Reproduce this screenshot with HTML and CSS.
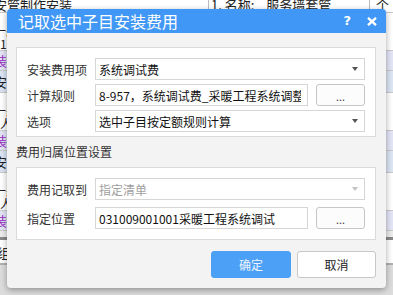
FILE: index.html
```html
<!DOCTYPE html>
<html lang="zh-CN">
<head>
<meta charset="utf-8">
<title>记取选中子目安装费用</title>
<link rel="stylesheet" href="styles.css">
</head>
<body>
<div class="sheet">
  <div class="srow head">
    <div class="cl">安管制作安装</div>
    <div class="cm"><span class="k">1. 名称:</span><span>服务墙套管</span></div>
    <div class="cr">个</div>
  </div>
  <div class="srow two">
    <div class="cl">一般管道<br>1)</div><div class="cm"></div><div class="cr"></div>
  </div>
  <div class="srow pur"><div class="cl">装饰</div><div class="cm"></div><div class="cr"></div></div>
  <div class="srow blue"><div class="cl">安管</div><div class="cm"></div><div class="cr"></div></div>
  <div class="srow two">
    <div class="cl">一般管道<br>人)</div><div class="cm"></div><div class="cr"></div>
  </div>
  <div class="srow pur"><div class="cl">装饰</div><div class="cm"></div><div class="cr"></div></div>
  <div class="srow blue"><div class="cl">安管</div><div class="cm"></div><div class="cr"></div></div>
  <div class="srow two">
    <div class="cl">一般管道<br>人)</div><div class="cm"></div><div class="cr"></div>
  </div>
  <div class="srow pur"><div class="cl">装饰</div><div class="cm"></div><div class="cr"></div></div>
  <div class="srow last"><div class="cl">组</div><div class="cm"></div><div class="cr">统</div></div>
</div>

<div class="dialog">
  <div class="titlebar">
    <span class="title">记取选中子目安装费用</span>
    <span class="tb-btns">
      <span class="help">?</span>
      <svg class="close" width="10" height="9" viewBox="0 0 10 9"><path d="M1 0.8 L9 8.2 M9 0.8 L1 8.2" stroke="#fff" stroke-width="2.3" fill="none"/></svg>
    </span>
  </div>
  <div class="body">
    <div class="panel p1">
      <div class="row">
        <span class="label">安装费用项</span>
        <div class="field select"><span class="val">系统调试费</span><span class="caret"></span></div>
      </div>
      <div class="row">
        <span class="label">计算规则</span>
        <div class="field"><span class="val">8-957，系统调试费_采暖工程系统调整费</span></div>
        <button class="dots">...</button>
      </div>
      <div class="row">
        <span class="label">选项</span>
        <div class="field select"><span class="val">选中子目按定额规则计算</span><span class="caret"></span></div>
      </div>
    </div>
    <div class="section">费用归属位置设置</div>
    <div class="panel p2">
      <div class="row">
        <span class="label">费用记取到</span>
        <div class="field select disabled"><span class="val">指定清单</span><span class="caret"></span></div>
      </div>
      <div class="row">
        <span class="label">指定位置</span>
        <div class="field"><span class="val">031009001001采暖工程系统调试</span></div>
        <button class="dots">...</button>
      </div>
    </div>
    <div class="actions">
      <button class="btn primary">确定</button>
      <button class="btn">取消</button>
    </div>
  </div>
</div>
</body>
</html>
```

FILE: styles.css
```css
* { box-sizing: border-box; }
html, body {
  margin: 0;
  padding: 0;
  width: 393px;
  height: 295px;
  overflow: hidden;
  background: #dcdcdc;
  font-family: "Noto Sans CJK SC", "Microsoft YaHei", "Noto Sans", sans-serif;
  font-size: 12px;
  color: #222;
}

/* background spreadsheet */
.sheet {
  margin-top: -4px;
  display: flex;
  flex-direction: column;
  background: #ececec;
}
.srow {
  display: flex;
  background: #fff;
  border-bottom: 1px solid #c9c9c9;
  line-height: 12px;
}
.cl {
  width: 209px;
  flex: none;
  overflow: hidden;
  white-space: nowrap;
  text-indent: -6px;
  border-right: 1px solid #bcbcbc;
  font-size: 13px;
}
.cm {
  width: 161px;
  flex: none;
  border-right: 1px solid #bcbcbc;
  white-space: nowrap;
  font-size: 13px;
  padding-left: 2px;
}
.cm .k { margin-right: 12px; }
.cr { flex: 1; font-size: 13px; padding-left: 6px; overflow: hidden; white-space: nowrap; }
.head { height: 17px; line-height: 17px; }
.two { height: 38px; padding-top: 11px; }
.two .cl { line-height: 13px; font-size: 12px; }
.pur { height: 20px; line-height: 20px; background: #e3e4f6; }
.pur .cl { color: #9a2fc2; }
.blue { height: 22px; line-height: 22px; background: #dbe5f3; }
.last {
  height: 28px;
  line-height: 26px;
  border-top: 3px solid #8a8a8a;
  border-bottom: 2px solid #b0b0b0;
  margin-top: 6px;
}
.last .cl { text-indent: -3px; }
.last .cr { padding-left: 0; text-indent: -1px; }

/* dialog */
.dialog {
  position: absolute;
  left: 7px;
  top: 9px;
  width: 379px;
  height: 279px;
  background: #f3f3f3;
  border-radius: 4px;
  box-shadow: 0 2px 6px rgba(0, 0, 0, 0.35);
  display: flex;
  flex-direction: column;
  overflow: hidden;
}
.titlebar {
  height: 24px;
  flex: none;
  background: #4097f5;
  color: #fff;
  display: flex;
  align-items: center;
  justify-content: space-between;
  padding: 0 9px 0 11px;
}
.title { font-size: 16px; line-height: 24px; letter-spacing: 0; }
.tb-btns { display: flex; align-items: center; gap: 16px; }
.help {
  font-family: "DejaVu Sans", sans-serif;
  font-weight: bold;
  font-size: 13px;
  line-height: 24px;
}
.close { display: block; }

.body {
  flex: 1;
  padding: 14px 10px 10px 9px;
  display: flex;
  flex-direction: column;
}
.panel {
  background: #fff;
  border: 1px solid #dadada;
  display: flex;
  flex-direction: column;
  padding: 10px 10px 4px 10px;
  gap: 4px;
}
.p2 { padding: 10px 10px 10px 10px; gap: 7px; }
.row {
  display: flex;
  align-items: center;
  height: 22px;
}
.label {
  width: 68px;
  flex: none;
  color: #333;
  font-size: 12px;
  white-space: nowrap;
}
.field {
  flex: 1;
  height: 22px;
  border: 1px solid #d6d6d6;
  background: #fff;
  display: flex;
  align-items: center;
  padding: 0 6px 0 3px;
  overflow: hidden;
  min-width: 0;
}
.val {
  flex: 1;
  white-space: nowrap;
  overflow: hidden;
  color: #111;
  font-size: 12px;
}
.caret {
  width: 0;
  height: 0;
  border-left: 3.5px solid transparent;
  border-right: 3.5px solid transparent;
  border-top: 4px solid #555;
  flex: none;
}
.disabled .val { color: #a0a0a0; }
.disabled .caret { border-top-color: #c4c4c4; }
.dots {
  width: 49px;
  height: 22px;
  margin-left: 8px;
  flex: none;
  border: 1px solid #c6c6c6;
  border-radius: 3px;
  background: #fcfcfc;
  font-family: "Noto Sans", sans-serif;
  font-size: 11px;
  color: #333;
  padding: 3px 0 0 0;
  line-height: 14px;
}
.section {
  height: 30px;
  line-height: 30px;
  color: #333;
  font-size: 12px;
}
.actions {
  margin-top: 11px;
  display: flex;
  justify-content: flex-end;
  gap: 6px;
}
.btn {
  width: 79px;
  height: 27px;
  border: 1px solid #c8c8c8;
  border-radius: 3px;
  background: #fff;
  font-family: "Noto Sans CJK SC", sans-serif;
  font-size: 12px;
  color: #222;
  padding: 0;
}
.btn.primary {
  width: 80px;
  background: #4ca0f6;
  border-color: #4ca0f6;
  color: #eef5ff;
}
```
